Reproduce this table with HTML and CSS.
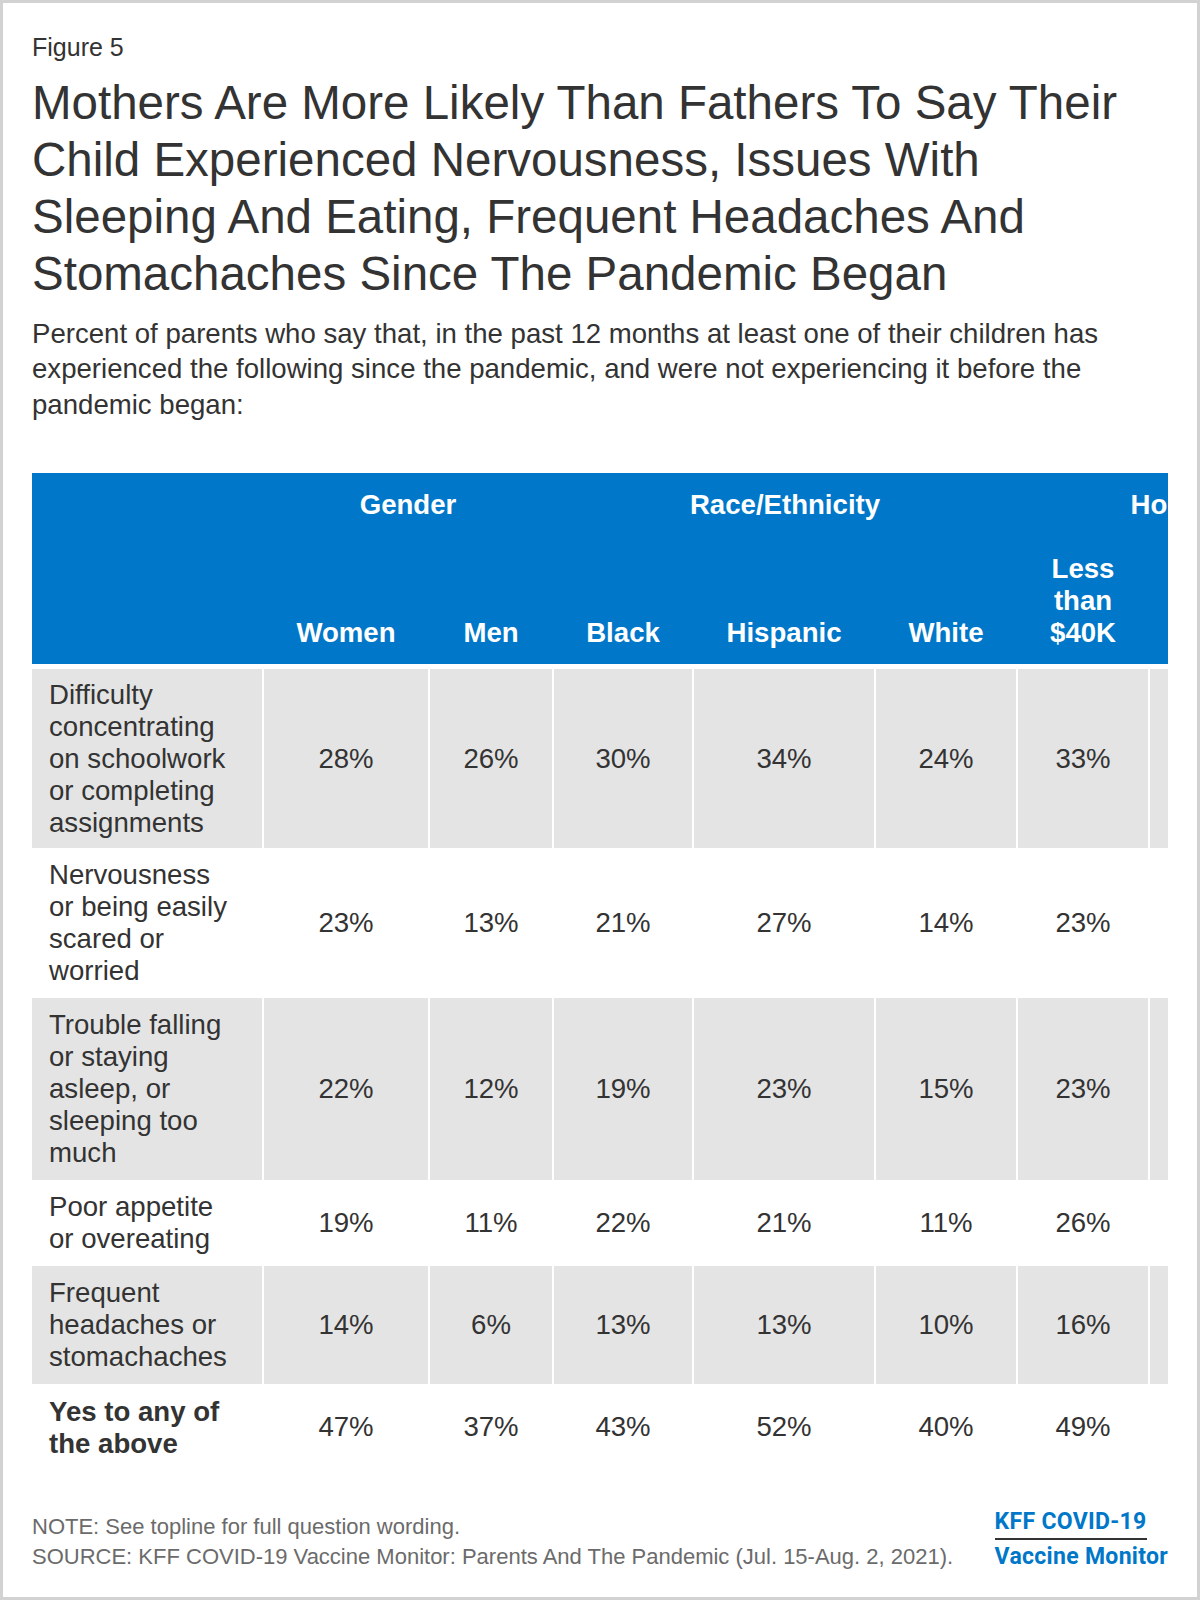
FILE: index.html
```html
<!DOCTYPE html>
<html lang="en">
<head>
<meta charset="utf-8">
<title>Figure 5</title>
<link rel="stylesheet" href="styles.css">
</head>
<body>
<div class="figure">
  <div class="fig-label">Figure 5</div>
  <h1 class="title">Mothers Are More Likely Than Fathers To Say Their Child Experienced Nervousness, Issues With Sleeping And Eating, Frequent Headaches And Stomachaches Since The Pandemic Began</h1>
  <p class="subtitle">Percent of parents who say that, in the past 12 months at least one of their children has experienced the following since the pandemic, and were not experiencing it before the pandemic began:</p>
  <div class="table-wrap">
    <table class="data">
      <colgroup>
        <col class="c-label">
        <col class="c-women">
        <col class="c-men">
        <col class="c-black">
        <col class="c-hisp">
        <col class="c-white">
        <col class="c-inc1">
        <col class="c-inc2">
        <col class="c-inc3">
      </colgroup>
      <thead>
        <tr class="groups">
          <th></th>
          <th colspan="2">Gender</th>
          <th colspan="3">Race/Ethnicity</th>
          <th colspan="3" class="income">Household Income</th>
        </tr>
        <tr class="cols">
          <th></th>
          <th>Women</th>
          <th>Men</th>
          <th>Black</th>
          <th>Hispanic</th>
          <th>White</th>
          <th>Less than $40K</th>
          <th></th>
          <th></th>
        </tr>
      </thead>
      <tbody>
        <tr class="shaded first">
          <td class="label">Difficulty concentrating on schoolwork or completing assignments</td>
          <td>28%</td><td>26%</td><td>30%</td><td>34%</td><td>24%</td><td>33%</td><td></td><td></td>
        </tr>
        <tr>
          <td class="label">Nervousness or being easily scared or worried</td>
          <td>23%</td><td>13%</td><td>21%</td><td>27%</td><td>14%</td><td>23%</td><td></td><td></td>
        </tr>
        <tr class="shaded">
          <td class="label">Trouble falling or staying asleep, or sleeping too much</td>
          <td>22%</td><td>12%</td><td>19%</td><td>23%</td><td>15%</td><td>23%</td><td></td><td></td>
        </tr>
        <tr>
          <td class="label">Poor appetite or overeating</td>
          <td>19%</td><td>11%</td><td>22%</td><td>21%</td><td>11%</td><td>26%</td><td></td><td></td>
        </tr>
        <tr class="shaded">
          <td class="label">Frequent headaches or stomachaches</td>
          <td>14%</td><td>6%</td><td>13%</td><td>13%</td><td>10%</td><td>16%</td><td></td><td></td>
        </tr>
        <tr class="total">
          <td class="label">Yes to any of the above</td>
          <td>47%</td><td>37%</td><td>43%</td><td>52%</td><td>40%</td><td>49%</td><td></td><td></td>
        </tr>
      </tbody>
    </table>
  </div>
  <div class="footer">
    <div class="notes">
      <p>NOTE: See topline for full question wording.</p>
      <p>SOURCE: KFF COVID-19 Vaccine Monitor: Parents And The Pandemic (Jul. 15-Aug. 2, 2021).</p>
    </div>
    <div class="logo">
      <span class="logo-top">KFF COVID-19</span>
      <span class="logo-bottom">Vaccine Monitor</span>
    </div>
  </div>
</div>
</body>
</html>
```

FILE: styles.css
```css
* {
  box-sizing: border-box;
}

html,
body {
  margin: 0;
  padding: 0;
  background: #ffffff;
}

body {
  font-family: "Liberation Sans", Arial, Helvetica, sans-serif;
  color: #333333;
}

.figure {
  width: 1200px;
  height: 1600px;
  border: 3px solid #d2d2d2;
  padding: 29px 29px 0;
  overflow: hidden;
}

.fig-label {
  font-size: 25px;
  line-height: 30px;
}

.title {
  margin: 11.5px 0 0;
  width: 1115px;
  font-size: 47.5px;
  line-height: 57px;
  font-weight: normal;
}

.subtitle {
  margin: 14px 0 0;
  font-size: 27.6px;
  line-height: 35.7px;
}

.table-wrap {
  margin-top: 50px;
  width: 1136px;
  overflow: hidden;
}

.data {
  table-layout: fixed;
  width: 1474px;
  border-collapse: separate;
  border-spacing: 0;
  font-size: 27.6px;
  line-height: 32px;
}

.c-label { width: 230px; }
.c-women { width: 166px; }
.c-men { width: 124px; }
.c-black { width: 140px; }
.c-hisp { width: 182px; }
.c-white { width: 142px; }
.c-inc1 { width: 132px; }
.c-inc2 { width: 180px; }
.c-inc3 { width: 178px; }

.data th {
  background: #0077c8;
  color: #ffffff;
  font-weight: bold;
  text-align: center;
  padding: 16px 10px 15px;
  border-left: 2px solid transparent;
}

.data th:first-child {
  border-left: 0;
}

.groups th {
  vertical-align: top;
  padding-bottom: 16px;
}

.groups th.income {
  padding-right: 26px;
}

.cols th {
  vertical-align: bottom;
}

.data td {
  text-align: center;
  vertical-align: middle;
  padding: 11px 6px;
  border-left: 2px solid #ffffff;
}

.data td.label {
  text-align: left;
  padding: 11px 26px 11px 17px;
  border-left: 0;
}

.data tr.first td {
  border-top: 5px solid #ffffff;
  padding-top: 10px;
  padding-bottom: 9px;
}

.shaded td {
  background: #e4e4e4;
}

.total td.label {
  font-weight: bold;
  padding-top: 12px;
}

.footer {
  margin-top: 39px;
  width: 1136px;
  display: flex;
  justify-content: space-between;
  align-items: last baseline;
}

.notes {
  color: #6b6b6b;
  font-size: 22px;
  line-height: 30px;
}

.notes p {
  margin: 0;
}

.logo {
  display: flex;
  flex-direction: column;
  align-items: flex-start;
  font-family: Roboto, "DejaVu Sans", sans-serif;
  font-weight: bold;
  color: #0077c8;
  font-size: 23px;
  line-height: 23px;
  letter-spacing: 0.3px;
}

.logo-top {
  display: inline-block;
  padding-bottom: 5px;
  border-bottom: 2px solid #333333;
}

.logo-bottom {
  margin-top: 5px;
}
```
